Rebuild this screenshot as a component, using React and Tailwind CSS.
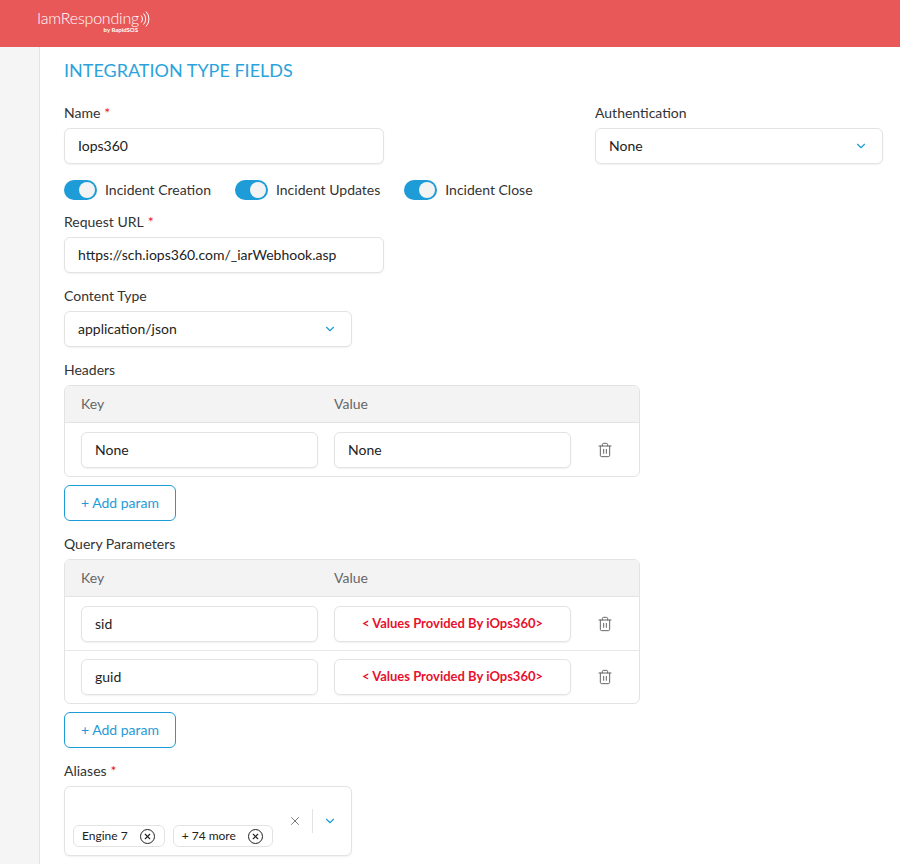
import React from 'react';
import { ChevronDown, X, Trash2 } from 'lucide-react';

const Label = ({ text, required }) => (
    <div className="h-[18px] leading-[18px] text-sm text-[#333]">
        {text}
        {required && <span className="text-[#e8112d] ml-1">*</span>}
    </div>
);

const TextBox = ({ value, className = '' }) => (
    <div className={`h-9 flex items-center px-[13px] bg-white border border-[#e3e3e3] rounded-md shadow-[0_1px_2px_rgba(0,0,0,0.06)] text-sm text-[#222] ${className}`}>
        {value}
    </div>
);

const SelectBox = ({ value, className = '' }) => (
    <div className={`h-9 flex items-center justify-between pl-[13px] pr-[14px] bg-white border border-[#e3e3e3] rounded-md shadow-[0_1px_2px_rgba(0,0,0,0.06)] text-sm text-[#222] ${className}`}>
        <span>{value}</span>
        <ChevronDown size={14} className="text-[#1e9cd7]" />
    </div>
);

const Toggle = ({ text }) => (
    <div className="flex items-center gap-2">
        <div className="w-[33px] h-5 rounded-full bg-[#1e9cd7] relative">
            <div className="absolute right-[2px] top-[2px] w-4 h-4 rounded-full bg-[#f3f3f3]" />
        </div>
        <span className="text-sm text-[#333]">{text}</span>
    </div>
);

const ParamTable = ({ rows }) => (
    <div className="w-[576px] mt-[6px] border border-[#e3e3e3] rounded-md overflow-hidden">
        <div className="h-[37px] flex items-center bg-[#f3f3f3] border-b border-[#e3e3e3] text-sm text-[#666] pl-4">
            <span className="w-[253px]">Key</span>
            <span>Value</span>
        </div>
        {rows.map((row, i) => (
            <div key={i} className={`h-[53px] flex items-center pl-4 gap-4 ${i > 0 ? 'border-t border-[#e8e8e8]' : ''}`}>
                <TextBox value={row.key} className="w-[237px]" />
                {row.provided ? (
                    <div className="w-[237px] h-9 flex items-center justify-center bg-white border border-[#e3e3e3] rounded-md shadow-[0_1px_2px_rgba(0,0,0,0.06)] text-[13px] font-bold text-[#e8112d]">
                        {'< Values Provided By iOps360>'}
                    </div>
                ) : (
                    <TextBox value={row.value} className="w-[237px]" />
                )}
                <Trash2 size={16} strokeWidth={1.5} className="ml-[10px] text-[#666]" />
            </div>
        ))}
    </div>
);

const AddParam = () => (
    <div className="w-28 h-9 mt-2 flex items-center justify-center border border-[#1e9cd7] rounded-md text-sm text-[#1e9cd7] bg-white">
        + Add param
    </div>
);

const Chip = ({ text }) => (
    <div className="h-[22px] flex items-center gap-3 pl-2 pr-[9px] border border-[#e3e3e3] rounded-md text-xs text-[#222]">
        <span>{text}</span>
        <span className="w-[15px] h-[15px] rounded-full border-[1.5px] border-[#222] flex items-center justify-center">
            <X size={9} strokeWidth={3} className="text-[#222]" />
        </span>
    </div>
);

const App = () => {
    return (
        <div className="h-[864px] overflow-hidden bg-white font-['Lato',sans-serif]">
            {/* Top bar */}
            <div className="h-[47px] bg-[#e85858] pl-[37px] pt-[10px] flex items-start">
                <div className="relative text-white leading-none">
                    <div className="text-[16px] font-light tracking-[-0.2px]">IamResponding</div>
                    <div className="text-[6px] font-bold text-right pr-[1px] mt-[1px]">by RapidSOS</div>
                    <svg className="absolute left-[102px] top-0 text-white" width="12" height="18" viewBox="0 0 12 18" fill="none" stroke="currentColor" strokeWidth="1">
                        <path d="M2 5.5a5 5 0 0 1 0 7" />
                        <path d="M4.5 3.5a8 8 0 0 1 0 11" />
                        <path d="M7 1.5a11 11 0 0 1 0 15" />
                    </svg>
                </div>
            </div>

            <div className="flex">
                {/* Sidebar strip */}
                <div className="w-10 h-[817px] bg-[#f5f5f5] border-r border-[#e3e3e3]" />

                {/* Form */}
                <div className="pl-6 pt-[12px] flex-1">
                    <h1 className="text-[18px] leading-[22px] text-[#2aa3dc] uppercase">Integration Type Fields</h1>

                    <div className="flex mt-[23px]">
                        <div className="w-[531px]">
                            <Label text="Name" required />
                            <TextBox value="Iops360" className="w-80 mt-[6px]" />
                        </div>
                        <div>
                            <Label text="Authentication" />
                            <SelectBox value="None" className="w-72 mt-[6px]" />
                        </div>
                    </div>

                    <div className="flex gap-6 mt-4">
                        <Toggle text="Incident Creation" />
                        <Toggle text="Incident Updates" />
                        <Toggle text="Incident Close" />
                    </div>

                    <div className="mt-[13px]">
                        <Label text="Request URL" required />
                        <TextBox value="https://sch.iops360.com/_iarWebhook.asp" className="w-80 mt-[6px]" />
                    </div>

                    <div className="mt-[14px]">
                        <Label text="Content Type" />
                        <SelectBox value="application/json" className="w-72 mt-[6px]" />
                    </div>

                    <div className="mt-[14px]">
                        <Label text="Headers" />
                        <ParamTable rows={[{ key: 'None', value: 'None' }]} />
                        <AddParam />
                    </div>

                    <div className="mt-[14px]">
                        <Label text="Query Parameters" />
                        <ParamTable rows={[{ key: 'sid', provided: true }, { key: 'guid', provided: true }]} />
                        <AddParam />
                    </div>

                    <div className="mt-[14px]">
                        <Label text="Aliases" required />
                        <div className="w-72 h-[70px] mt-[6px] flex border border-[#e3e3e3] rounded-md shadow-[0_1px_2px_rgba(0,0,0,0.06)] bg-white">
                            <div className="flex-1 flex items-end gap-2 pl-2 pb-[8px]">
                                <Chip text="Engine 7" />
                                <Chip text="+ 74 more" />
                            </div>
                            <div className="flex items-center pr-[14px]">
                                <X size={14} strokeWidth={1.5} className="text-[#666]" />
                                <div className="w-px h-6 bg-[#e3e3e3] mx-[10px]" />
                                <ChevronDown size={14} className="text-[#1e9cd7]" />
                            </div>
                        </div>
                    </div>
                </div>
            </div>
        </div>
    );
};

export default App;
